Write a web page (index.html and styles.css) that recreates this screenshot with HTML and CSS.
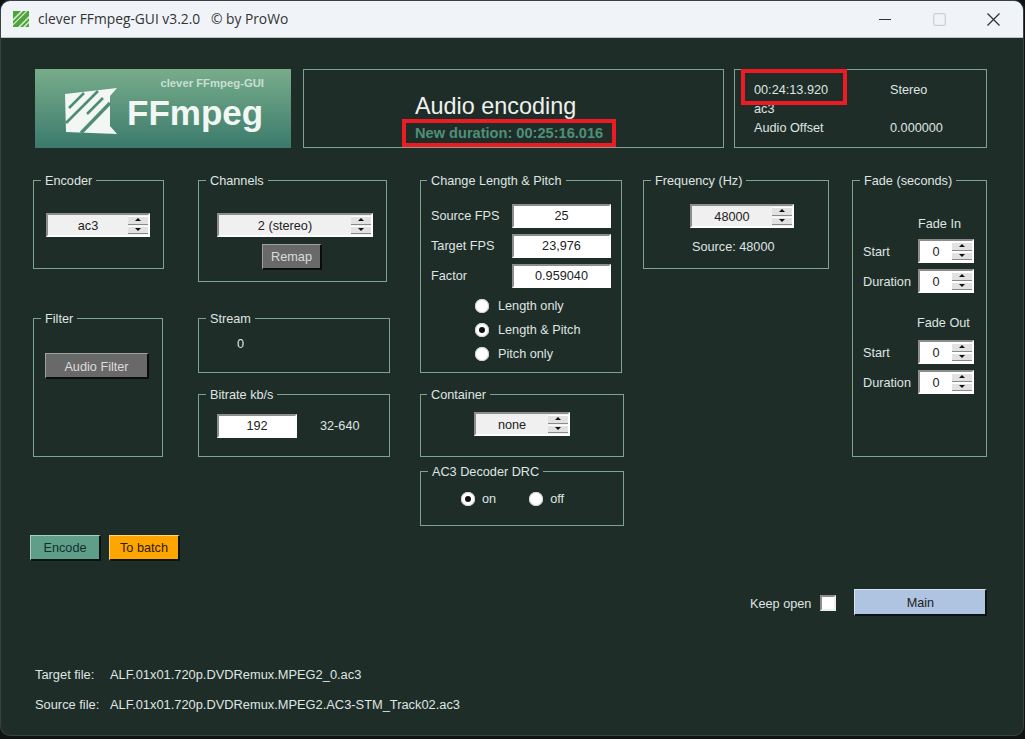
FILE: index.html
```html
<!DOCTYPE html>
<html lang="en">
<head>
<meta charset="utf-8">
<title>clever FFmpeg-GUI</title>
<link rel="stylesheet" href="styles.css">
</head>
<body>
<div class="window">
  <header class="titlebar">
    <svg class="app-icon" viewBox="0 0 16 16"><rect width="16" height="16" fill="#4fa53c"/><path d="M0 8 8 0h2L0 10zM0 13 13 0h1.5L0 14.5zM5 16 16 5v2L7 16zM10 16l6-6v2l-4 4z" fill="#e4f2dc"/></svg>
    <span class="title-text">clever FFmpeg-GUI v3.2.0&nbsp;&nbsp; © by ProWo</span>
    <div class="win-controls">
      <span class="win-btn"><svg width="12" height="12" viewBox="0 0 12 12"><path d="M0 6.5h12" stroke="#333" stroke-width="1.2"/></svg></span>
      <span class="win-btn"><svg width="13" height="13" viewBox="0 0 13 13"><rect x=".7" y=".7" width="11.6" height="11.6" rx="1.5" fill="none" stroke="#c9ced2" stroke-width="1.2"/></svg></span>
      <span class="win-btn"><svg width="13" height="13" viewBox="0 0 13 13"><path d="M.5.5l12 12M12.5.5l-12 12" stroke="#333" stroke-width="1.3"/></svg></span>
    </div>
  </header>

  <main class="content">
    <section class="top-row">
      <div class="logo">
        <span class="logo-sub">clever FFmpeg-GUI</span>
        <div class="logo-main">
          <svg class="logo-mark" viewBox="0 0 52 46">
            <path fill="#f2f7f3" d="M0 6 52 0 45 8V38L52 46 1 44Z"/>
            <path fill="none" stroke="#4f8c76" stroke-width="2.6" d="M19 5 4 20M33 3 1 35M38 10 22 26"/>
            <path fill="none" stroke="#4f8c76" stroke-width="3.4" d="M45 15 16 45"/>
          </svg>
          <span class="logo-word">FFmpeg</span>
        </div>
      </div>
      <div class="panel panel-title">
        <div class="heading">Audio encoding</div>
        <div class="duration">New duration: 00:25:16.016</div>
        <span class="mark mark-duration"></span>
      </div>
      <div class="panel panel-info">
        <span>00:24:13.920</span><span>Stereo</span>
        <span>ac3</span><span></span>
        <span>Audio Offset</span><span>0.000000</span>
        <span class="mark mark-time"></span>
      </div>
    </section>

    <section class="groups">
      <div class="col">
        <div class="group g-encoder">
          <span class="legend">Encoder</span>
          <div class="spin w-104"><span class="spin-val">ac3</span><span class="arrows"><i class="up"></i><i class="down"></i></span></div>
        </div>
        <div class="group g-filter">
          <span class="legend">Filter</span>
          <button class="btn btn-grey w-104">Audio Filter</button>
        </div>
      </div>

      <div class="col">
        <div class="group g-channels">
          <span class="legend">Channels</span>
          <div class="spin w-156"><span class="spin-val">2 (stereo)</span><span class="arrows"><i class="up"></i><i class="down"></i></span></div>
          <button class="btn btn-grey btn-remap">Remap</button>
        </div>
        <div class="group g-stream">
          <span class="legend">Stream</span>
          <span>0</span>
        </div>
        <div class="group g-bitrate">
          <span class="legend">Bitrate kb/s</span>
          <div class="input w-80">192</div>
          <span>32-640</span>
        </div>
      </div>

      <div class="col">
        <div class="group g-length">
          <span class="legend">Change Length &amp; Pitch</span>
          <div class="field"><span>Source FPS</span><div class="input w-99">25</div></div>
          <div class="field"><span>Target FPS</span><div class="input w-99">23,976</div></div>
          <div class="field"><span>Factor</span><div class="input w-99">0.959040</div></div>
          <div class="radios">
            <label class="radio"><i class="dot"></i>Length only</label>
            <label class="radio"><i class="dot on"></i>Length &amp; Pitch</label>
            <label class="radio"><i class="dot"></i>Pitch only</label>
          </div>
        </div>
        <div class="group g-container">
          <span class="legend">Container</span>
          <div class="spin w-96"><span class="spin-val">none</span><span class="arrows"><i class="up"></i><i class="down"></i></span></div>
        </div>
        <div class="group g-drc">
          <span class="legend">AC3 Decoder DRC</span>
          <label class="radio"><i class="dot on"></i>on</label>
          <label class="radio"><i class="dot"></i>off</label>
        </div>
      </div>

      <div class="col">
        <div class="group g-freq">
          <span class="legend">Frequency (Hz)</span>
          <div class="spin w-104"><span class="spin-val">48000</span><span class="arrows"><i class="up"></i><i class="down"></i></span></div>
          <span class="source">Source: 48000</span>
        </div>
      </div>

      <div class="col">
        <div class="group g-fade">
          <span class="legend">Fade (seconds)</span>
          <div class="fade-head">Fade In</div>
          <div class="fade-row"><span>Start</span><div class="spin spin-white w-56"><span class="spin-val">0</span><span class="arrows"><i class="up"></i><i class="down"></i></span></div></div>
          <div class="fade-row"><span>Duration</span><div class="spin spin-white w-56"><span class="spin-val">0</span><span class="arrows"><i class="up"></i><i class="down"></i></span></div></div>
          <div class="fade-head fade-head-out">Fade Out</div>
          <div class="fade-row"><span>Start</span><div class="spin spin-white w-56"><span class="spin-val">0</span><span class="arrows"><i class="up"></i><i class="down"></i></span></div></div>
          <div class="fade-row"><span>Duration</span><div class="spin spin-white w-56"><span class="spin-val">0</span><span class="arrows"><i class="up"></i><i class="down"></i></span></div></div>
        </div>
      </div>
    </section>

    <section class="actions">
      <button class="btn btn-encode">Encode</button>
      <button class="btn btn-batch">To batch</button>
    </section>

    <section class="main-row">
      <span class="keep-label">Keep open</span>
      <span class="check"></span>
      <button class="btn btn-main">Main</button>
    </section>

    <section class="files">
      <div class="file"><span class="file-label">Target file:</span><span>ALF.01x01.720p.DVDRemux.MPEG2_0.ac3</span></div>
      <div class="file"><span class="file-label">Source file:</span><span>ALF.01x01.720p.DVDRemux.MPEG2.AC3-STM_Track02.ac3</span></div>
    </section>
  </main>
</div>
</body>
</html>
```

FILE: styles.css
```css
* { box-sizing: border-box; }

html, body { margin: 0; height: 739px; overflow: hidden; }

body {
  background: #0f1412;
  font-family: "Liberation Sans", Arial, sans-serif;
  font-size: 12.7px;
  line-height: 16px;
  color: #dfe5e1;
}

.window {
  width: 1022px;
  height: 734px;
  margin: 1px 0 0 1px;
  border-radius: 9px;
  overflow: hidden;
  background: #1f2d29;
  box-shadow: 0 0 0 1px #3a4240;
}

.titlebar {
  display: flex;
  align-items: center;
  height: 37px;
  padding-left: 12px;
  background: #f0f4f9;
  border-bottom: 1px solid #b9c6c6;
}

.app-icon { width: 16px; height: 16px; margin-right: 9px; }

.title-text {
  font-family: "Open Sans", sans-serif;
  font-size: 13.8px;
  color: #333;
}

.win-controls { display: flex; margin-left: auto; padding-right: 2px; }

.win-btn {
  display: flex;
  align-items: center;
  justify-content: center;
  width: 54.5px;
  height: 36px;
}

.content { padding: 31px 0 0 32px; }

.top-row { display: flex; height: 79px; padding-left: 2px; }

.logo {
  width: 256px;
  height: 79px;
  margin-right: 12px;
  background: linear-gradient(#78ad8b, #3b7a6c);
}

.logo-sub {
  display: block;
  padding: 7px 27px 0 0;
  text-align: right;
  font-size: 11.3px;
  font-weight: 700;
  line-height: 14px;
  color: #c8dfd0;
}

.logo-main { display: flex; align-items: center; padding: 0 0 0 30px; }

.logo-mark { width: 52px; height: 46px; margin-top: -2px; }

.logo-word {
  margin: 2px 0 0 10px;
  font-size: 35px;
  line-height: 40px;
  font-weight: 700;
  color: #f2f7f3;
}

.panel { position: relative; border: 1px solid #7ca393; height: 79px; }

.panel-title {
  width: 421px;
  margin-right: 10px;
  padding: 23px 0 0 111px;
}

.heading { font-size: 23.4px; line-height: 26px; color: #eef1ee; }

.duration { font-weight: 700; font-size: 14.6px; line-height: 16px; margin-top: 6px; color: #4f9078; }

.panel-info {
  display: grid;
  grid-template-columns: 136px 1fr;
  grid-template-rows: 19px 19px 19px;
  width: 253px;
  padding: 10px 0 0 19px;
  align-items: center;
}

.mark { position: absolute; border: 4px solid #ed1c24; }

.mark-duration { left: 98px; top: 49px; width: 214px; height: 28px; }

.mark-time { left: 6px; top: -1px; width: 106px; height: 36px; }

.groups {
  display: grid;
  grid-template-columns: 165px 222px 223px 209px 135px;
  margin-top: 32px;
  height: 346px;
}

.col { display: flex; flex-direction: column; align-items: flex-start; }

.group { position: relative; border: 1px solid #7ca393; }

.legend {
  position: absolute;
  left: 7px;
  top: -8px;
  padding: 0 4px;
  background: #1f2d29;
  white-space: nowrap;
}

.g-length .legend, .g-container .legend { left: 6px; }

.g-encoder { width: 131px; height: 89px; padding: 32px 0 0 12px; }
.g-filter { width: 130px; height: 139px; margin-top: 49px; padding: 34px 0 0 11px; }
.g-filter .btn { padding-top: 3px; }

.g-channels { width: 189px; height: 102px; padding: 32px 0 0 18px; }
.btn-remap { width: 60px; margin: 7px 0 0 45px; padding-top: 2px; }
.g-stream { width: 192px; height: 55px; margin-top: 36px; padding: 17px 0 0 38px; }
.g-bitrate {
  display: flex;
  align-items: center;
  gap: 23px;
  width: 192px;
  height: 63px;
  margin-top: 21px;
  padding-left: 18px;
}

.g-length { width: 202px; height: 193px; padding: 23px 0 0 10px; }
.field { display: flex; align-items: center; justify-content: space-between; width: 180px; height: 24px; margin-bottom: 6px; }
.radios { display: flex; flex-direction: column; padding-left: 44px; margin-top: 1px; }
.radios .radio { height: 24px; }
.g-container { width: 204px; height: 63px; margin-top: 21px; padding: 17px 0 0 53px; }
.g-drc {
  display: flex;
  align-items: center;
  gap: 33px;
  width: 204px;
  height: 55px;
  margin-top: 14px;
  padding-left: 40px;
}
.g-drc .dot { margin-right: 7px; }

.g-freq { width: 186px; height: 89px; padding: 23px 0 0 46px; }
.source { display: block; margin: 11px 0 0 2px; }

.g-fade { width: 135px; height: 277px; padding: 34px 0 0 10px; }
.fade-head { height: 17px; margin-bottom: 7px; padding: 1px 0 0 55px; }
.fade-head-out { margin: 21px 0 9px; padding-left: 54px; }
.fade-row { display: flex; align-items: center; justify-content: space-between; width: 111px; height: 24px; margin-bottom: 6px; }
.fade-row > span { padding-top: 1px; }

.input, .spin {
  display: flex;
  align-items: center;
  height: 24px;
  border-style: solid;
  border-width: 2px;
  border-color: #8d8d8d #fff #fff #8d8d8d;
  color: #222;
}

.input { justify-content: center; background: #fff; }
.spin { background: #f0f0f0; }
.spin-white { background: #fff; }

.spin-val { flex: 1; padding-top: 1px; text-align: center; }

.arrows { display: flex; flex-direction: column; gap: 1px; width: 20px; height: 18px; }

.arrows i {
  position: relative;
  flex: 1;
  background: #e2e2e2;
  border-bottom: 1px solid #8a8a8a;
  border-top: 1px solid #fff;
}

.arrows i::after {
  content: "";
  position: absolute;
  left: 7px;
  top: 1px;
  border-left: 3px solid transparent;
  border-right: 3px solid transparent;
}

.arrows .up::after { border-bottom: 3px solid #111; }
.arrows .down::after { border-top: 3px solid #111; }

.w-56 { width: 56px; }
.w-80 { width: 80px; }
.w-96 { width: 96px; }
.w-99 { width: 99px; }
.w-104 { width: 104px; }
.w-156 { width: 156px; }

.btn {
  display: block;
  height: 26px;
  padding: 1px 0 0;
  font: inherit;
  border-style: solid;
  border-width: 1px 2px 2px 1px;
}

.btn-grey { background: #696969; color: #dcdcdc; border-color: #a0a0a0 #0c0c0c #0c0c0c #a0a0a0; }

.actions { display: flex; gap: 8px; margin: 9px 0 0 -3px; }

.btn-encode { width: 71px; background: #5f9f8a; color: #12302a; border-color: #a5cfc0 #0c1412 #0c1412 #a5cfc0; }
.btn-batch { width: 71px; background: #ffa500; color: #2b2008; border-color: #ffd27a #0c1412 #0c1412 #ffd27a; }

.main-row {
  display: flex;
  align-items: center;
  height: 27px;
  margin-top: 28px;
  padding-left: 717px;
}

.keep-label { padding-top: 3px; }

.check { width: 16px; height: 16px; margin-left: 9px; background: #fff; border-style: solid; border-width: 2px; border-color: #8d8d8d #eee #eee #8d8d8d; }

.btn-main { width: 133px; height: 27px; margin-left: 18px; background: #aec4e0; color: #222; border-color: #d5e2f2 #0c1412 #0c1412 #d5e2f2; }

.files { margin: 44px 0 0 2px; font-size: 12.85px; }

.file { display: flex; align-items: center; height: 30px; }

.file-label { width: 75px; }

.radio { display: flex; align-items: center; }

.dot {
  position: relative;
  width: 14px;
  height: 14px;
  margin-right: 9px;
  border-radius: 50%;
  background: #fff;
  box-shadow: inset 0 0 0 1px #cfd5d2;
}

.dot.on::after {
  content: "";
  position: absolute;
  left: 4px;
  top: 4px;
  width: 6px;
  height: 6px;
  border-radius: 50%;
  background: #111;
}
```
